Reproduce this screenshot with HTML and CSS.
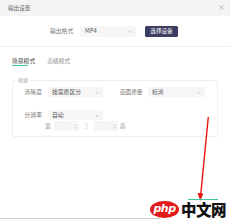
FILE: index.html
```html
<!DOCTYPE html>
<html lang="zh">
<head>
<meta charset="utf-8">
<link rel="stylesheet" href="styles.css">
</head>
<body>
<div class="page">
  <div class="dialog">
    <div class="header">
      <span class="title">输出设置</span>
      <svg class="close" width="5" height="5" viewBox="0 0 5 5"><path d="M0.5 0.5L4.5 4.5M4.5 0.5L0.5 4.5" stroke="#9a9a9a" stroke-width="0.7"/></svg>
    </div>
    <div class="format-row">
      <span class="label">输出格式</span>
      <div class="select w-format"><span>MP4</span><svg class="chev" width="4" height="3" viewBox="0 0 4 3"><path d="M0.3 0.5L2 2.3L3.7 0.5" fill="none" stroke="#aaa" stroke-width="0.6"/></svg></div>
      <div class="btn">选择设备</div>
    </div>
    <div class="tabs">
      <span class="tab active">简易模式</span>
      <span class="tab">高级模式</span>
    </div>
    <fieldset class="group">
      <legend>视频</legend>
      <div class="row r1">
        <span class="flabel">清晰度</span>
        <div class="select s-a"><span>按需质区分</span><svg class="chev" width="4" height="3" viewBox="0 0 4 3"><path d="M0.3 0.5L2 2.3L3.7 0.5" fill="none" stroke="#aaa" stroke-width="0.6"/></svg></div>
        <span class="flabel2">画面质量</span>
        <div class="select s-b"><span>标清</span><svg class="chev" width="4" height="3" viewBox="0 0 4 3"><path d="M0.3 0.5L2 2.3L3.7 0.5" fill="none" stroke="#aaa" stroke-width="0.6"/></svg></div>
      </div>
      <div class="row r2">
        <span class="flabel">分辨率</span>
        <div class="select s-a"><span>自动</span><svg class="chev" width="4" height="3" viewBox="0 0 4 3"><path d="M0.3 0.5L2 2.3L3.7 0.5" fill="none" stroke="#aaa" stroke-width="0.6"/></svg></div>
      </div>
      <div class="row r3">
        <span class="dim">宽</span>
        <div class="num n1"><span>-</span><svg class="spin" width="3" height="5" viewBox="0 0 3 5"><path d="M0.3 2L1.5 0.6L2.7 2M0.3 3L1.5 4.4L2.7 3" fill="none" stroke="#bbb" stroke-width="0.5"/></svg></div>
        <span class="sep">3</span>
        <div class="num n2"><span>-</span><svg class="spin" width="3" height="5" viewBox="0 0 3 5"><path d="M0.3 2L1.5 0.6L2.7 2M0.3 3L1.5 4.4L2.7 3" fill="none" stroke="#bbb" stroke-width="0.5"/></svg></div>
        <span class="dim">高</span>
      </div>
    </fieldset>
  </div>
  <div class="bottom-line"></div>

  <svg class="arrow" width="230" height="219" viewBox="0 0 230 219">
    <path d="M208.3 117L200.6 196" stroke="#e8130e" stroke-width="1.4" fill="none"/>
    <path d="M197.6 193L200.2 201L203.4 193.6Z" fill="#e8130e"/>
  </svg>
  <div class="green-line"></div>
  <div class="logo">
    <span class="php">php</span><span class="cn">中文网</span>
  </div>
</div>
</body>
</html>
```

FILE: styles.css
```css
* { box-sizing: border-box; }
html, body { margin: 0; padding: 0; background: #fff; }
body {
  font-family: "Noto Sans CJK SC", "Noto Sans", sans-serif;
  color: #333;
}
.page {
  position: relative;
  width: 230px;
  height: 219px;
  display: flex;
  flex-direction: column;
  overflow: hidden;
}
.dialog { flex: 1; display: flex; flex-direction: column; }
.header {
  height: 16px;
  background: #f4f4f5;
  display: flex;
  align-items: center;
  justify-content: space-between;
  padding: 0 6px 1px 8px;
}
.title { font-size: 5.6px; line-height: 8px; color: #666; }
.close { display: block; }
.format-row {
  height: 31px;
  border-bottom: 1px solid #efefef;
  display: flex;
  align-items: center;
  padding: 0 0 0 50px;
}
.label { font-size: 5.8px; line-height: 8px; color: #777; width: 30px; white-space: nowrap; }
.select {
  height: 10px;
  background: #f6f6f7;
  border-radius: 1px;
  display: flex;
  align-items: center;
  justify-content: space-between;
  padding: 0 4px 0 4px;
  font-size: 5.8px;
  line-height: 8px;
  color: #555;
  white-space: nowrap;
}
.chev { display: block; }
.w-format { width: 56px; height: 11px; padding-left: 5px; }
.btn {
  margin-left: 9px;
  width: 33px;
  height: 11px;
  background: #3d3e63;
  color: #fff;
  border-radius: 1.5px;
  font-size: 5.6px;
  line-height: 11px;
  text-align: center;
  white-space: nowrap;
}
.tabs {
  display: flex;
  gap: 12px;
  padding-left: 12px;
}
.tab {
  font-size: 5.8px;
  line-height: 8px;
  padding-top: 10px;
  padding-bottom: 2px;
  color: #8f8f8f;
  white-space: nowrap;
}
.tab.active { color: #444; }
.tab.active::after {
  content: "";
  display: block;
  width: 16px;
  height: 1px;
  background: #3cc8a4;
}
.group {
  margin: 9px 12px 0 12px;
  padding: 0 0 5px 0;
  border: 1px solid #efefef;
  border-radius: 2px;
  min-width: 0;
}
.group legend {
  margin-left: 4px;
  padding: 0 1px;
  font-size: 5px;
  line-height: 6px;
  color: #aaa;
}
.row { display: flex; align-items: center; height: 10px; }
.r1 { margin-top: 4px; }
.r2 { margin-top: 13px; }
.r3 { margin-top: 1px; }
.flabel {
  width: 29px;
  text-align: right;
  font-size: 5.8px;
  line-height: 8px;
  color: #777;
  margin-right: 6px;
  white-space: nowrap;
}
.flabel2 {
  margin-left: 17px;
  width: 22px;
  font-size: 5.6px;
  line-height: 8px;
  color: #777;
  margin-right: 6px;
  white-space: nowrap;
}
.s-a { width: 55px; }
.s-b { width: 57px; }
.dim {
  font-size: 5.8px;
  line-height: 8px;
  color: #888;
  white-space: nowrap;
}
.r3 .dim:first-child { margin-left: 32px; margin-right: 3px; }
.num {
  height: 10px;
  background: #f6f6f7;
  display: flex;
  align-items: center;
  justify-content: space-between;
  padding: 0 2px 0 4px;
  font-size: 5.8px;
  line-height: 8px;
  color: #bbb;
}
.n1 { width: 25px; }
.n2 { width: 24px; margin-right: 2px; }
.sep {
  font-size: 7px;
  line-height: 8px;
  color: #d8d8d8;
  margin: 0 6px 0 5px;
}
.spin { display: block; }
.bottom-line {
  height: 1px;
  width: 160px;
  background: #cfcfcf;
}
.arrow { position: absolute; left: 0; top: 0; pointer-events: none; }
.green-line {
  position: absolute;
  left: 188px;
  top: 199px;
  width: 30px;
  height: 1px;
  background: #3cc8a4;
}
.logo {
  position: absolute;
  left: 150px;
  top: 201px;
  display: flex;
  align-items: center;
  height: 17px;
}
.php {
  width: 29px;
  height: 17px;
  border-radius: 50%;
  background: #e21b1b;
  color: #fff;
  font-family: "DejaVu Sans", sans-serif;
  font-style: italic;
  font-weight: bold;
  font-size: 11px;
  line-height: 16px;
  text-align: center;
  letter-spacing: -0.5px;
}
.cn {
  margin-left: 2px;
  font-family: "Noto Sans CJK SC", sans-serif;
  font-weight: 900;
  font-size: 15.5px;
  line-height: 17px;
  color: #111;
  letter-spacing: -0.5px;
}
```
